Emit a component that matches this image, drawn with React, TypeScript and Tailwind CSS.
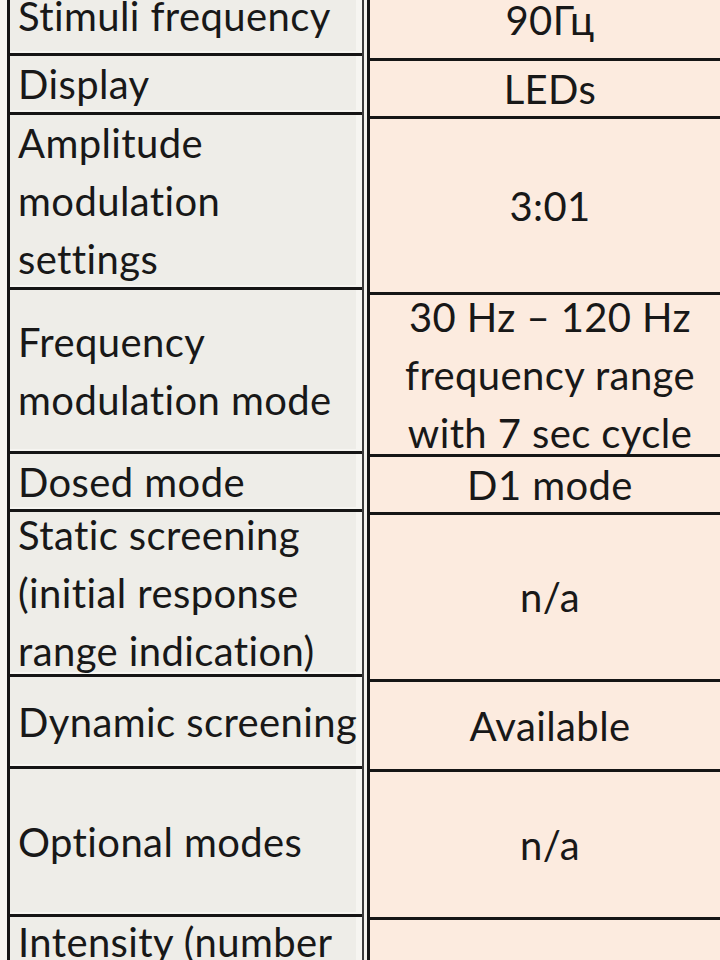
import React from "react";

type Row = { h: number; lines: string[]; top?: boolean };

// heights include the 3px bottom rule; the two columns are a few px out of step in the scan
const LEFT: Row[] = [
  { h: 78, lines: ["Stimuli frequency"] },
  { h: 59, lines: ["Display"] },
  { h: 175, lines: ["Amplitude", "modulation", "settings"] },
  { h: 164, lines: ["Frequency", "modulation mode"] },
  { h: 58, lines: ["Dosed mode"] },
  { h: 165, lines: ["Static screening", "(initial response", "range indication)"] },
  { h: 92, lines: ["Dynamic screening"] },
  { h: 148, lines: ["Optional modes"] },
  { h: 100, lines: ["Intensity (number"], top: true },
];

const RIGHT: Row[] = [
  { h: 80, lines: ["90Гц"] },
  { h: 58, lines: ["LEDs"] },
  { h: 176, lines: ["3:01"] },
  { h: 162, lines: ["30 Hz – 120 Hz", "frequency range", "with 7 sec cycle"] },
  { h: 58, lines: ["D1 mode"] },
  { h: 167, lines: ["n/a"] },
  { h: 90, lines: ["Available"] },
  { h: 148, lines: ["n/a"] },
  { h: 100, lines: [], top: true },
];

function Cell({ row, side }: { row: Row; side: "left" | "right" }) {
  return (
    <div
      style={{ height: row.h }}
      className={
        "flex shrink-0 flex-col border-b-[3px] border-[#151515] " +
        (side === "left"
          ? "bg-[#eeede8] pl-[8px] pr-1 shadow-[inset_-6px_0_0_#f6f5f1,inset_0_-2px_0_#f6f5f1] "
          : "items-center bg-[#fcebdf] text-center ") +
        (row.top ? "justify-start" : "justify-center")
      }
    >
      {row.lines.map((l) => (
        <div key={l} className={"whitespace-nowrap leading-[58px]" + (row.top ? " -mt-[4px]" : "")}>
          {l}
        </div>
      ))}
    </div>
  );
}

export default function App() {
  return (
    <div className="flex h-[960px] w-[720px] items-stretch overflow-hidden bg-[#f6f5f1] font-['Lato',sans-serif] text-[40px] tracking-[0.01em] text-[#181818] [font-variant-ligatures:none]">
      <div className="ml-[7px] w-[3px] shrink-0 bg-[#151515]" />
      <div className="-mt-[22px] flex w-[352px] shrink-0 flex-col">
        {LEFT.map((r, i) => (
          <Cell key={i} row={r} side="left" />
        ))}
      </div>
      <div className="w-[2px] shrink-0 bg-[#3c3c3c]" />
      <div className="w-[3px] shrink-0 bg-[#f4f2ee]" />
      <div className="w-[3px] shrink-0 bg-[#151515]" />
      <div className="-mt-[19px] flex w-[360px] shrink-0 flex-col">
        {RIGHT.map((r, i) => (
          <Cell key={i} row={r} side="right" />
        ))}
      </div>
    </div>
  );
}
